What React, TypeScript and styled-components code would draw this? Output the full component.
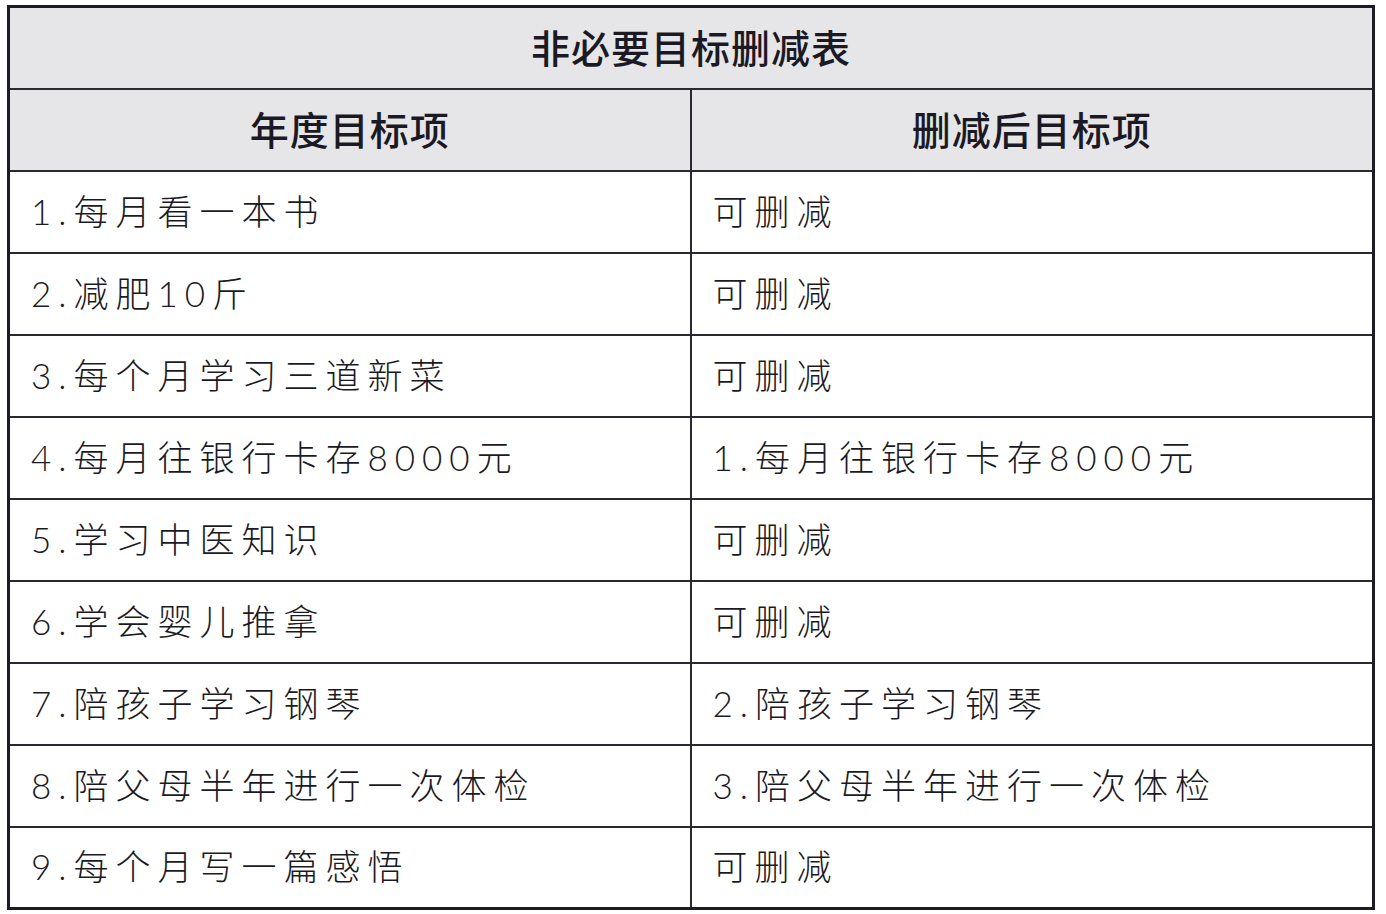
import React from 'react';
import styled, { createGlobalStyle } from 'styled-components';

const GlobalStyle = createGlobalStyle`
  html, body {
    margin: 0;
    padding: 0;
    background: #ffffff;
  }
  body {
    font-family: "Noto Sans CJK SC", "Noto Sans", sans-serif;
    color: #1b1a24;
  }
`;

const rows = [
  { goal: '1.每月看一本书', result: '可删减' },
  { goal: '2.减肥10斤', result: '可删减' },
  { goal: '3.每个月学习三道新菜', result: '可删减' },
  { goal: '4.每月往银行卡存8000元', result: '1.每月往银行卡存8000元' },
  { goal: '5.学习中医知识', result: '可删减' },
  { goal: '6.学会婴儿推拿', result: '可删减' },
  { goal: '7.陪孩子学习钢琴', result: '2.陪孩子学习钢琴' },
  { goal: '8.陪父母半年进行一次体检', result: '3.陪父母半年进行一次体检' },
  { goal: '9.每个月写一篇感悟', result: '可删减' }
];

const App: React.FC = () => (
  <>
    <GlobalStyle />
    <Page>
      <Table>
        <colgroup>
          <col style={{ width: 682 }} />
          <col />
        </colgroup>
        <thead>
          <tr>
            <TitleCell colSpan={2}>非必要目标删减表</TitleCell>
          </tr>
          <tr>
            <HeadCell>年度目标项</HeadCell>
            <HeadCell>删减后目标项</HeadCell>
          </tr>
        </thead>
        <tbody>
          {rows.map((row) => (
            <tr key={row.goal}>
              <BodyCell>{row.goal}</BodyCell>
              <BodyCell>{row.result}</BodyCell>
            </tr>
          ))}
        </tbody>
      </Table>
    </Page>
  </>
);

const Page = styled.div`
  width: 1386px;
  height: 914px;
  padding: 5px 0 0 7px;
  box-sizing: border-box;
  overflow: hidden;
`;

const Table = styled.table`
  width: 1368px;
  border-collapse: collapse;
  table-layout: fixed;
  border: 3px solid #1c1b26;
`;

const TitleCell = styled.th`
  height: 82px;
  padding: 0 0 4px 0;
  box-sizing: border-box;
  background: #e6e6e8;
  border: 2px solid #2a2932;
  font-size: 39px;
  font-weight: 500;
  letter-spacing: 1px;
  text-align: center;
  vertical-align: middle;
`;

const HeadCell = styled(TitleCell)``;

const BodyCell = styled.td`
  height: 82px;
  padding: 0 0 5px 21px;
  box-sizing: border-box;
  background: #ffffff;
  border: 2px solid #2a2932;
  font-family: Lato, "Noto Sans CJK SC", sans-serif;
  font-size: 35px;
  font-weight: 300;
  letter-spacing: 7px;
  white-space: nowrap;
  vertical-align: middle;
`;

export default App;
